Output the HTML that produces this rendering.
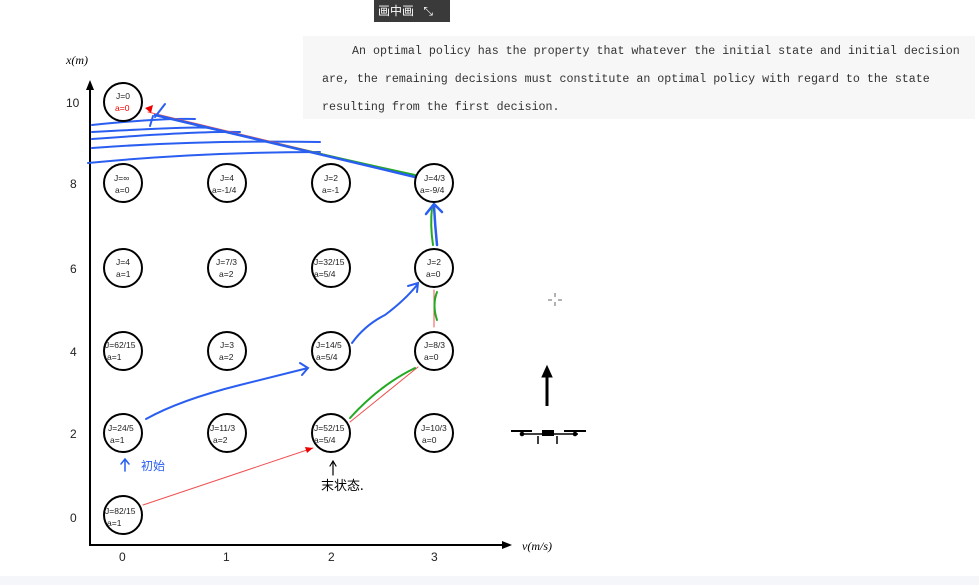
<!DOCTYPE html>
<html><head><meta charset="utf-8"><style>
body{margin:0;width:979px;height:585px;background:#fff;position:relative;overflow:hidden;font-family:"Liberation Sans","Noto Sans CJK SC",sans-serif}
.pip{position:absolute;left:374px;top:0;width:76px;height:22px;background:#3a3a3a;color:#fff;font-size:12px;line-height:22px;padding-left:4px;box-sizing:border-box;overflow:hidden}
.q{position:absolute;left:303px;top:36px;width:672px;height:83px;background:#f7f7f7;font-family:"Liberation Mono",monospace;font-size:11.65px;color:#333;overflow:hidden}
.q div{position:absolute;white-space:nowrap}
.bot{position:absolute;left:0;top:576px;width:979px;height:9px;background:#f4f6f9}
</style></head><body>
<div class="pip">画中画 <span style="margin-left:6px">⤡</span></div>
<div class="q">
<div style="left:49px;top:9px">An optimal policy has the property that whatever the initial state and initial decision</div>
<div style="left:19px;top:37px">are, the remaining decisions must constitute an optimal policy with regard to the state</div>
<div style="left:19px;top:65px">resulting from the first decision.</div>
</div>
<svg width="979" height="585" style="position:absolute;left:0;top:0" font-family="Liberation Sans,sans-serif">
<g stroke="#000" stroke-width="2" fill="none">
<line x1="90" y1="86" x2="90" y2="545"/><line x1="89" y1="545" x2="505" y2="545"/>
</g>
<polygon points="90,80 86,90 94,90" fill="#000"/><polygon points="512,545 502,541 502,549" fill="#000"/>
<text x="66" y="64" font-family="Liberation Serif,serif" font-style="italic" font-size="12">x(m)</text>
<text x="522" y="550" font-family="Liberation Serif,serif" font-style="italic" font-size="12">v(m/s)</text>
<g font-size="12" fill="#222">
<text x="66" y="107">10</text><text x="70" y="188">8</text><text x="70" y="273">6</text><text x="70" y="356">4</text><text x="70" y="438">2</text><text x="70" y="522">0</text>
<text x="119" y="561">0</text><text x="223" y="561">1</text><text x="328" y="561">2</text><text x="431" y="561">3</text>
</g>
<g fill="none" stroke-linecap="round">
<path d="M92,125 Q160,118 195,119 M92,132 Q200,126 210,128 M92,139 Q200,131 240,132 M92,148 Q200,140 320,142 M88,163 Q200,152 320,152" stroke="#2a5ef0" stroke-width="2"/>
<path d="M143,505 L313,448" stroke="#f05050" stroke-width="1"/>
<path d="M148,112 L415,176" stroke="#f05050" stroke-width="1"/>
<path d="M350,422 L418,367" stroke="#f05050" stroke-width="1"/>
<path d="M434,327 L434,290" stroke="#f05050" stroke-width="1"/>
<path d="M350,418 Q380,385 415,368" stroke="#22aa22" stroke-width="2"/>
<path d="M437,320 Q432,305 437,292" stroke="#22aa22" stroke-width="2"/>
<path d="M433,245 Q430,225 432,208" stroke="#22aa22" stroke-width="2"/>
<path d="M155,115 Q300,150 415,175" stroke="#22aa22" stroke-width="2"/>
<path d="M155,115 Q300,150 415,177" stroke="#2a5ef0" stroke-width="2.5"/>
<path d="M155,117 L165,104 M153,116 L150,126" stroke="#2a5ef0" stroke-width="2"/>
<path d="M437,245 Q435,225 434,206 M426,214 L434,204 L442,212" stroke="#2a5ef0" stroke-width="2.5"/>
<path d="M146,419 Q180,400 240,385 Q280,375 308,368 M300,363 L308,368 L302,375" stroke="#2a5ef0" stroke-width="2"/>
<path d="M352,343 Q365,325 385,315 Q405,300 417,285 M408,286 L418,283 L417,292" stroke="#2a5ef0" stroke-width="2"/>
<path d="M125,471 L125,460 M121,464 L125,459 L129,464" stroke="#2a5ef0" stroke-width="1.5"/>
<path d="M333,475 L333,462 M330,466 L333,461 L336,466" stroke="#000" stroke-width="1.2"/>
</g>
<polygon points="313,448 305,447 307,453" fill="#e00"/>
<polygon points="145,108 153,105 151,113" fill="#e00"/>
<text x="141" y="470" font-size="12" fill="#2a5ef0" font-family="Noto Sans CJK SC,sans-serif">初始</text>
<text x="321" y="490" font-size="13" fill="#000" font-family="Noto Sans CJK SC,sans-serif">末状态.</text>
<g fill="#fff" stroke="#000" stroke-width="2">
<circle cx="123" cy="102" r="19"/>
<circle cx="123" cy="183" r="19"/><circle cx="227" cy="183" r="19"/><circle cx="331" cy="183" r="19"/><circle cx="434" cy="183" r="19"/>
<circle cx="123" cy="268" r="19"/><circle cx="227" cy="268" r="19"/><circle cx="331" cy="268" r="19"/><circle cx="434" cy="268" r="19"/>
<circle cx="123" cy="351" r="19"/><circle cx="227" cy="351" r="19"/><circle cx="331" cy="351" r="19"/><circle cx="434" cy="351" r="19"/>
<circle cx="123" cy="433" r="19"/><circle cx="227" cy="433" r="19"/><circle cx="331" cy="433" r="19"/><circle cx="434" cy="433" r="19"/>
<circle cx="123" cy="515" r="19"/>
</g>
<g font-size="8.5" fill="#222">
<text x="116" y="99">J=0</text><text x="115" y="111" fill="#e00">a=0</text>
<text x="114" y="181">J=∞</text><text x="115" y="193">a=0</text>
<text x="220" y="181">J=4</text><text x="212" y="193">a=-1/4</text>
<text x="324" y="181">J=2</text><text x="322" y="193">a=-1</text>
<text x="424" y="181">J=4/3</text><text x="420" y="193">a=-9/4</text>
<text x="116" y="265">J=4</text><text x="116" y="277">a=1</text>
<text x="216" y="265">J=7/3</text><text x="219" y="277">a=2</text>
<text x="314" y="265">J=32/15</text><text x="314" y="277">a=5/4</text>
<text x="427" y="265">J=2</text><text x="426" y="277">a=0</text>
<text x="105" y="348">J=62/15</text><text x="107" y="360">a=1</text>
<text x="220" y="348">J=3</text><text x="219" y="360">a=2</text>
<text x="316" y="348">J=14/5</text><text x="316" y="360">a=5/4</text>
<text x="424" y="348">J=8/3</text><text x="424" y="360">a=0</text>
<text x="108" y="431">J=24/5</text><text x="110" y="443">a=1</text>
<text x="210" y="431">J=11/3</text><text x="213" y="443">a=2</text>
<text x="314" y="431">J=52/15</text><text x="314" y="443">a=5/4</text>
<text x="421" y="431">J=10/3</text><text x="422" y="443">a=0</text>
<text x="105" y="514">J=82/15</text><text x="107" y="526">a=1</text>
</g>
<g stroke="#000" fill="#000">
<line x1="547" y1="406" x2="547" y2="375" stroke-width="3"/><polygon points="547,366 542,377 552,377"/>
<line x1="520" y1="434" x2="578" y2="434" stroke-width="1.5"/>
<line x1="511" y1="431" x2="532" y2="431" stroke-width="2"/><line x1="564" y1="431" x2="586" y2="431" stroke-width="2"/>
<rect x="542" y="430" width="12" height="6" stroke="none"/>
<circle cx="522" cy="434" r="1.8"/><circle cx="575" cy="434" r="1.8"/>
<path d="M538,436 V444 M557,436 V444" stroke-width="1.5" fill="none"/>
</g>
<g stroke="#666" stroke-width="1"><line x1="555" y1="293" x2="555" y2="297"/><line x1="555" y1="302" x2="555" y2="306"/><line x1="548" y1="300" x2="552" y2="300"/><line x1="558" y1="300" x2="562" y2="300"/></g>
</svg>
<div class="bot"></div>
</body></html>
